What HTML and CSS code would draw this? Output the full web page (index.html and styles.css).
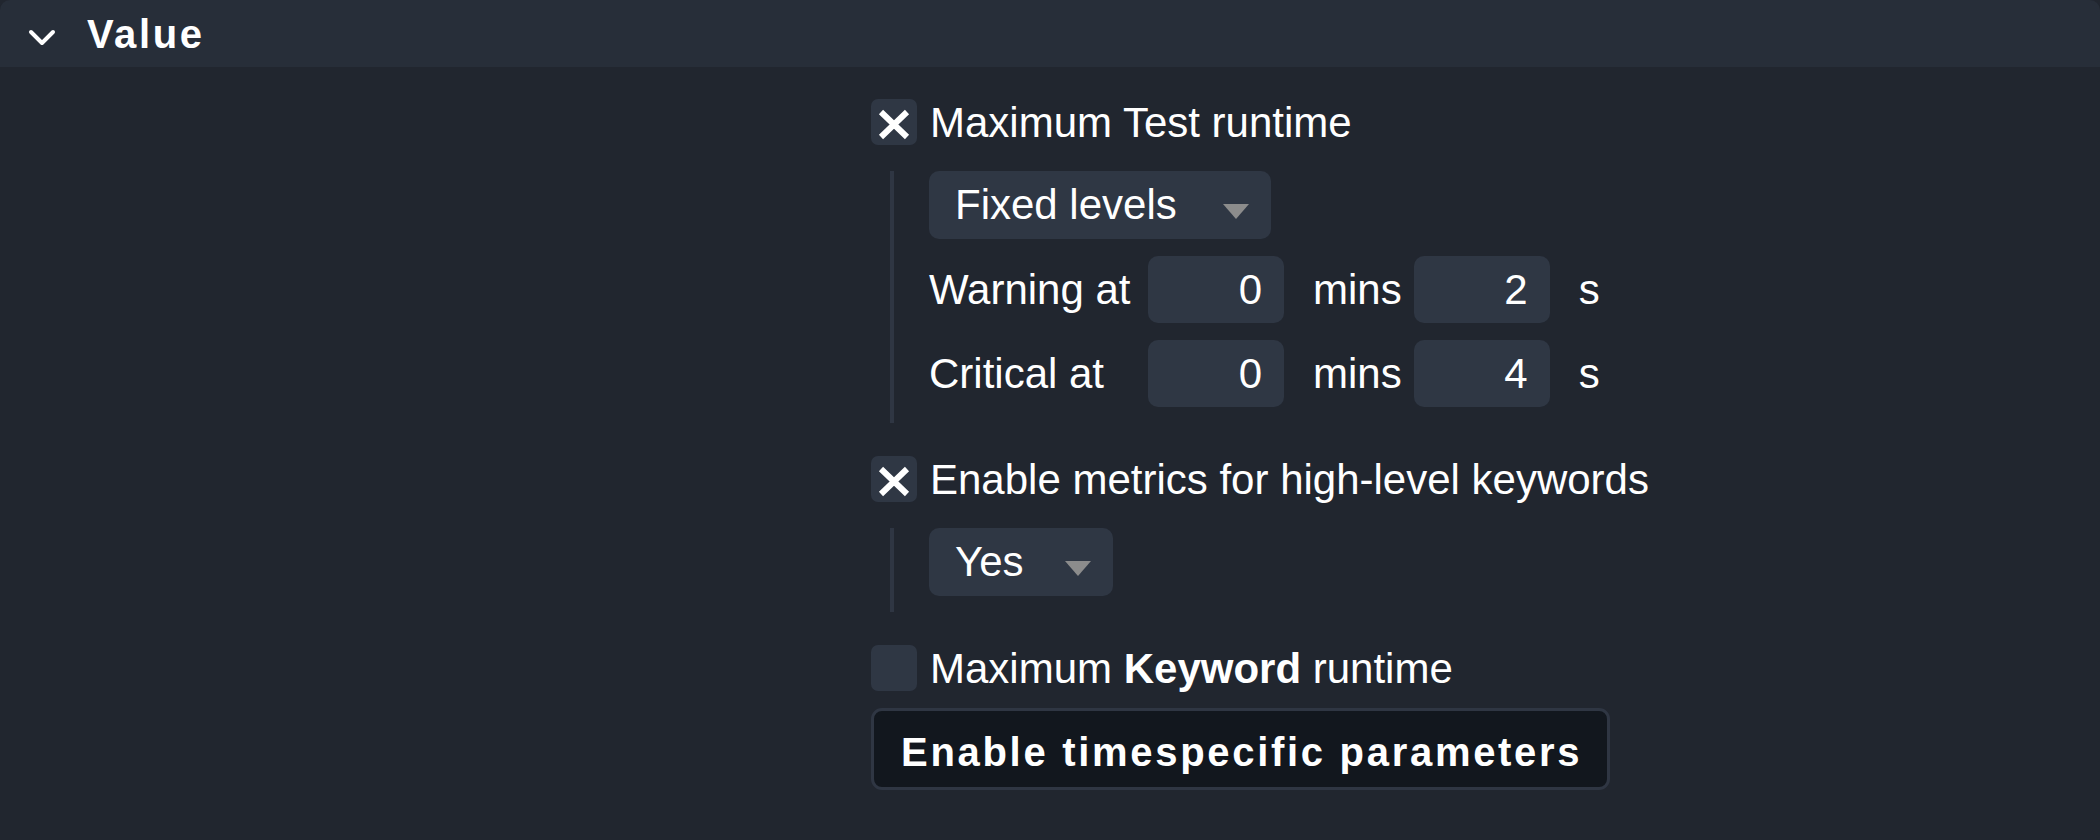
FILE: index.html
```html
<!DOCTYPE html>
<html>
<head>
<meta charset="utf-8">
<title>Value</title>
<link rel="stylesheet" href="styles.css">
</head>
<body>
<div class="panel">
  <div class="panel-head">
    <svg class="chevron" width="28" height="17" viewBox="0 0 28 17"><polyline points="3,3 14,14 25,3" fill="none" stroke="#fff" stroke-width="4" stroke-linecap="round" stroke-linejoin="round"/></svg>
    <span class="panel-title">Value</span>
  </div>
  <div class="panel-body">
    <div class="legend"></div>
    <div class="content">
      <div class="check-row">
        <span class="checkbox"><svg width="46" height="46" viewBox="0 0 46 46"><path d="M10 13 L36 38 M36 13 L10 38" stroke="#fff" stroke-width="6" fill="none"/></svg></span>
        <span class="check-label">Maximum Test runtime</span>
      </div>
      <div class="nested">
        <div class="select select-levels"><span>Fixed levels</span><span class="arrow"></span></div>
        <div class="level-row">
          <span class="level-label">Warning at</span>
          <span class="num">0</span>
          <span class="unit unit-mins">mins</span>
          <span class="num">2</span>
          <span class="unit unit-s">s</span>
        </div>
        <div class="level-row">
          <span class="level-label">Critical at</span>
          <span class="num">0</span>
          <span class="unit unit-mins">mins</span>
          <span class="num">4</span>
          <span class="unit unit-s">s</span>
        </div>
      </div>
      <div class="check-row">
        <span class="checkbox"><svg width="46" height="46" viewBox="0 0 46 46"><path d="M10 13 L36 38 M36 13 L10 38" stroke="#fff" stroke-width="6" fill="none"/></svg></span>
        <span class="check-label">Enable metrics for high-level keywords</span>
      </div>
      <div class="nested">
        <div class="select select-yes"><span>Yes</span><span class="arrow"></span></div>
      </div>
      <div class="check-row">
        <span class="checkbox"></span>
        <span class="check-label">Maximum <b>Keyword</b> runtime</span>
      </div>
      <div class="button">Enable timespecific parameters</div>
    </div>
  </div>
</div>
</body>
</html>
```

FILE: styles.css
```css
html, body {
  margin: 0;
  padding: 0;
}

body {
  width: 2100px;
  height: 840px;
  overflow: hidden;
  background: #21262f;
  color: #ffffff;
  font-family: "Liberation Sans", Arial, sans-serif;
}

.panel-head {
  height: 67px;
  box-sizing: border-box;
  background: #272e39;
  border-radius: 10px 10px 0 0;
  display: flex;
  align-items: center;
  padding-left: 28px;
}

.chevron {
  margin-top: 8px;
  flex: none;
}

.panel-title {
  margin-left: 31px;
  margin-top: 2px;
  font-size: 40px;
  font-weight: bold;
  letter-spacing: 2.6px;
}

.panel-body {
  display: flex;
  padding-top: 32px;
}

.legend {
  width: 871px;
  flex: none;
}

.content {
  display: flex;
  flex-direction: column;
  align-items: flex-start;
}

.check-row {
  display: flex;
  align-items: center;
  gap: 13px;
  height: 46px;
}

.checkbox {
  width: 46px;
  height: 46px;
  flex: none;
  border-radius: 7px;
  background: #2f3744;
  display: flex;
  align-items: center;
  justify-content: center;
}

.check-label {
  font-size: 42px;
  white-space: nowrap;
  padding-top: 2px;
}

.check-label b {
  font-weight: bold;
}

.nested {
  margin: 26px 0 33px 19px;
  border-left: 4px solid #2f3643;
  padding: 0 0 16px 35px;
  display: flex;
  flex-direction: column;
  align-items: flex-start;
  gap: 17px;
}

.select {
  height: 68px;
  box-sizing: border-box;
  border-radius: 10px;
  background: #2f3744;
  display: flex;
  align-items: center;
  justify-content: space-between;
  padding: 0 22px 0 26px;
  font-size: 42px;
}

.select-levels {
  width: 342px;
}

.select-yes {
  width: 184px;
}

.arrow {
  width: 0;
  height: 0;
  border-left: 13px solid transparent;
  border-right: 13px solid transparent;
  border-top: 15px solid #8c8c8c;
  margin-top: 12px;
}

.level-row {
  display: flex;
  align-items: center;
  height: 67px;
  font-size: 42px;
}

.level-label {
  width: 219px;
  flex: none;
}

.num {
  width: 136px;
  height: 67px;
  box-sizing: border-box;
  flex: none;
  background: #2f3744;
  border-radius: 10px;
  display: flex;
  align-items: center;
  justify-content: flex-end;
  padding-right: 22px;
}

.unit-mins {
  margin: 0 12px 0 29px;
}

.unit-s {
  margin-left: 29px;
}

.button {
  margin-top: 17px;
  width: 739px;
  height: 82px;
  box-sizing: border-box;
  border: 3px solid #2f3643;
  border-radius: 11px;
  background: #12171e;
  display: flex;
  align-items: center;
  padding-left: 27px;
  padding-top: 6px;
  font-size: 40px;
  font-weight: bold;
  letter-spacing: 2.7px;
  white-space: nowrap;
}
```
